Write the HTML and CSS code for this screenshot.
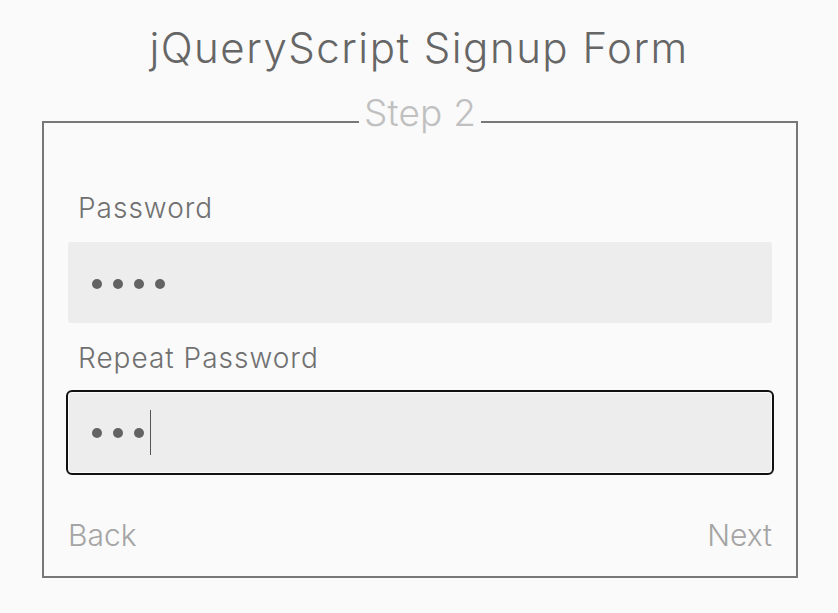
FILE: index.html
```html
<!DOCTYPE html>
<html lang="en">
<head>
<meta charset="utf-8">
<title>jQueryScript Signup Form</title>
<link rel="stylesheet" href="styles.css">
</head>
<body>
<h1 class="title">jQueryScript Signup Form</h1>
<form class="signup">
  <fieldset class="step">
    <legend class="step-legend">Step 2</legend>
    <label class="field-label">Password</label>
    <div class="field" role="textbox" aria-label="Password">
      <span class="dot"></span><span class="dot"></span><span class="dot"></span><span class="dot"></span>
    </div>
    <label class="field-label">Repeat Password</label>
    <div class="field field-focus" role="textbox" aria-label="Repeat Password">
      <span class="dot"></span><span class="dot"></span><span class="dot"></span><span class="caret"></span>
    </div>
    <div class="actions">
      <span class="action">Back</span>
      <span class="action">Next</span>
    </div>
  </fieldset>
</form>
</body>
</html>
```

FILE: styles.css
```css
html, body {
  margin: 0;
  padding: 0;
  background: #fafafa;
}
body {
  font-family: "Inter", "Liberation Sans", sans-serif;
  font-weight: 300;
}
.title {
  margin: 22px 0 0;
  font-size: 42px;
  font-weight: 300;
  line-height: 51px;
  letter-spacing: 1.5px;
  color: #666;
  text-align: center;
}
.signup {
  margin: 0;
}
.step {
  margin: 18px 40px 0 42px;
  border: 2px solid #777;
  padding: 39px 24px 23px;
  min-width: 0;
}
.step-legend {
  margin: 0 auto;
  padding: 0 5px 17px;
  font-size: 37px;
  line-height: 44px;
  letter-spacing: 0.2px;
  color: #c0c0c0;
}
.field-label {
  display: block;
  padding-left: 10px;
  font-size: 28px;
  line-height: 34px;
  letter-spacing: 1px;
  color: #707070;
  margin-bottom: 17px;
}
.field {
  display: flex;
  align-items: center;
  gap: 11px;
  height: 81px;
  box-sizing: border-box;
  padding: 3px 24px 0;
  background: #ededed;
  border-radius: 3px;
  margin-bottom: 18px;
}
.field-focus {
  outline: 2px solid #111;
  border-radius: 4px;
  box-shadow: inset 0 0 0 1px #fafafa;
  padding-top: 0;
}
.dot {
  width: 10px;
  height: 10px;
  border-radius: 50%;
  background: #636363;
}
.caret {
  width: 1px;
  height: 45px;
  background: #555;
  margin-left: -5px;
}
.actions {
  display: flex;
  justify-content: space-between;
  margin-top: 44px;
  font-size: 30px;
  line-height: 36px;
  color: #a5a5a5;
}
```
